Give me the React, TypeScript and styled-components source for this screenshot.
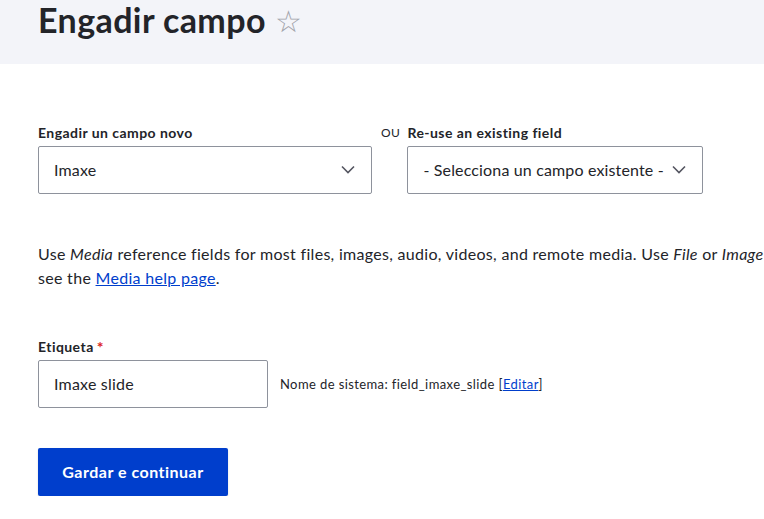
import React from "react";
import styled, { createGlobalStyle } from "styled-components";

const Global = createGlobalStyle`
  html, body { margin: 0; padding: 0; background: #fff; }
  body { font-family: Lato, "Noto Sans", sans-serif; color: #232429; overflow: hidden; }
  * { box-sizing: border-box; }
`;

const Header = styled.header`
  background: #f3f4f9;
  height: 64px;
  padding: 0 38px;
  display: flex;
  align-items: flex-start;
`;

const Title = styled.h1`
  margin: 0;
  font-size: 34px;
  font-weight: 700;
  line-height: 40px;
  letter-spacing: 0.4px;
  color: #232429;
  display: flex;
  align-items: center;
  gap: 9px;
`;

const Star = styled.span`
  font-size: 30px;
  font-weight: 400;
  color: #a0a2aa;
  line-height: 1;
  letter-spacing: 0;
`;

const Main = styled.main`
  padding: 60px 38px 0;
  display: flex;
  flex-direction: column;
`;

const FieldRow = styled.div`
  display: flex;
  align-items: flex-start;
`;

const Field = styled.div`
  display: flex;
  flex-direction: column;
`;

const Label = styled.label`
  font-size: 14px;
  font-weight: 700;
  line-height: 18px;
  letter-spacing: 0.45px;
  margin-bottom: 4px;
  color: #232429;
  display: flex;
  gap: 3px;
`;

const Req = styled.span`
  color: #dc2323;
  font-size: 16px;
  line-height: 18px;
`;

const Or = styled.span`
  font-size: 12px;
  text-transform: uppercase;
  line-height: 18px;
  margin: 0 7px 0 9px;
  letter-spacing: 0.5px;
`;

const SelectBox = styled.div<{ $w: number }>`
  width: ${(p) => p.$w}px;
  height: 48px;
  border: 1px solid #8e929c;
  border-radius: 2px;
  display: flex;
  align-items: center;
  justify-content: space-between;
  padding: 0 16px 2px 15px;
  font-size: 16px;
  letter-spacing: 0.15px;
  color: #232429;
`;

const Chevron = () => (
  <svg width="14" height="9" viewBox="0 0 14 9">
    <path d="M1 1.5l6 6 6-6" fill="none" stroke="#545560" strokeWidth="1.6" />
  </svg>
);

const Desc = styled.p`
  margin: 48px 0 0;
  font-size: 16px;
  line-height: 24px;
  letter-spacing: 0.3px;
  white-space: nowrap;
`;

const Link = styled.a`
  color: #003ecc;
  text-decoration: underline;
`;

const LabelSection = styled.div`
  margin-top: 48px;
  display: flex;
  flex-direction: column;
`;

const InputRow = styled.div`
  display: flex;
  align-items: center;
  gap: 12px;
`;

const TextInput = styled.div`
  width: 230px;
  height: 48px;
  border: 1px solid #8e929c;
  border-radius: 2px;
  display: flex;
  align-items: center;
  padding: 0 15px 2px;
  font-size: 16px;
  letter-spacing: 0.2px;
`;

const Machine = styled.span`
  font-size: 13px;
  letter-spacing: 0.4px;
  color: #232429;
`;

const Button = styled.button`
  margin-top: 40px;
  width: 190px;
  height: 48px;
  background: #003ecc;
  color: #fff;
  border: none;
  border-radius: 2px;
  font-family: inherit;
  font-size: 16px;
  font-weight: 700;
  letter-spacing: 0.5px;
  padding-bottom: 2px;
  box-shadow: 0 1px 2px rgba(0,0,0,0.15);
`;

export default function App() {
  return (
    <>
      <Global />
      <Header>
        <Title>
          Engadir campo <Star>☆</Star>
        </Title>
      </Header>
      <Main>
        <FieldRow>
          <Field>
            <Label>Engadir un campo novo</Label>
            <SelectBox $w={334}>
              Imaxe <Chevron />
            </SelectBox>
          </Field>
          <Or>ou</Or>
          <Field>
            <Label>Re-use an existing field</Label>
            <SelectBox $w={296}>
              - Selecciona un campo existente - <Chevron />
            </SelectBox>
          </Field>
        </FieldRow>
        <Desc>
          Use <em>Media</em> reference fields for most files, images, audio, videos, and remote media. Use <em>File</em> or <em>Image</em> reference fields when creating your own media types, or for legacy files and images created before installing the Media module.
          <br />
          see the <Link href="#">Media help page</Link>.
        </Desc>
        <LabelSection>
          <Label>
            Etiqueta<Req>*</Req>
          </Label>
          <InputRow>
            <TextInput>Imaxe slide</TextInput>
            <Machine>
              Nome de sistema: field_imaxe_slide [<Link href="#">Editar</Link>]
            </Machine>
          </InputRow>
        </LabelSection>
        <div>
          <Button>Gardar e continuar</Button>
        </div>
      </Main>
    </>
  );
}
